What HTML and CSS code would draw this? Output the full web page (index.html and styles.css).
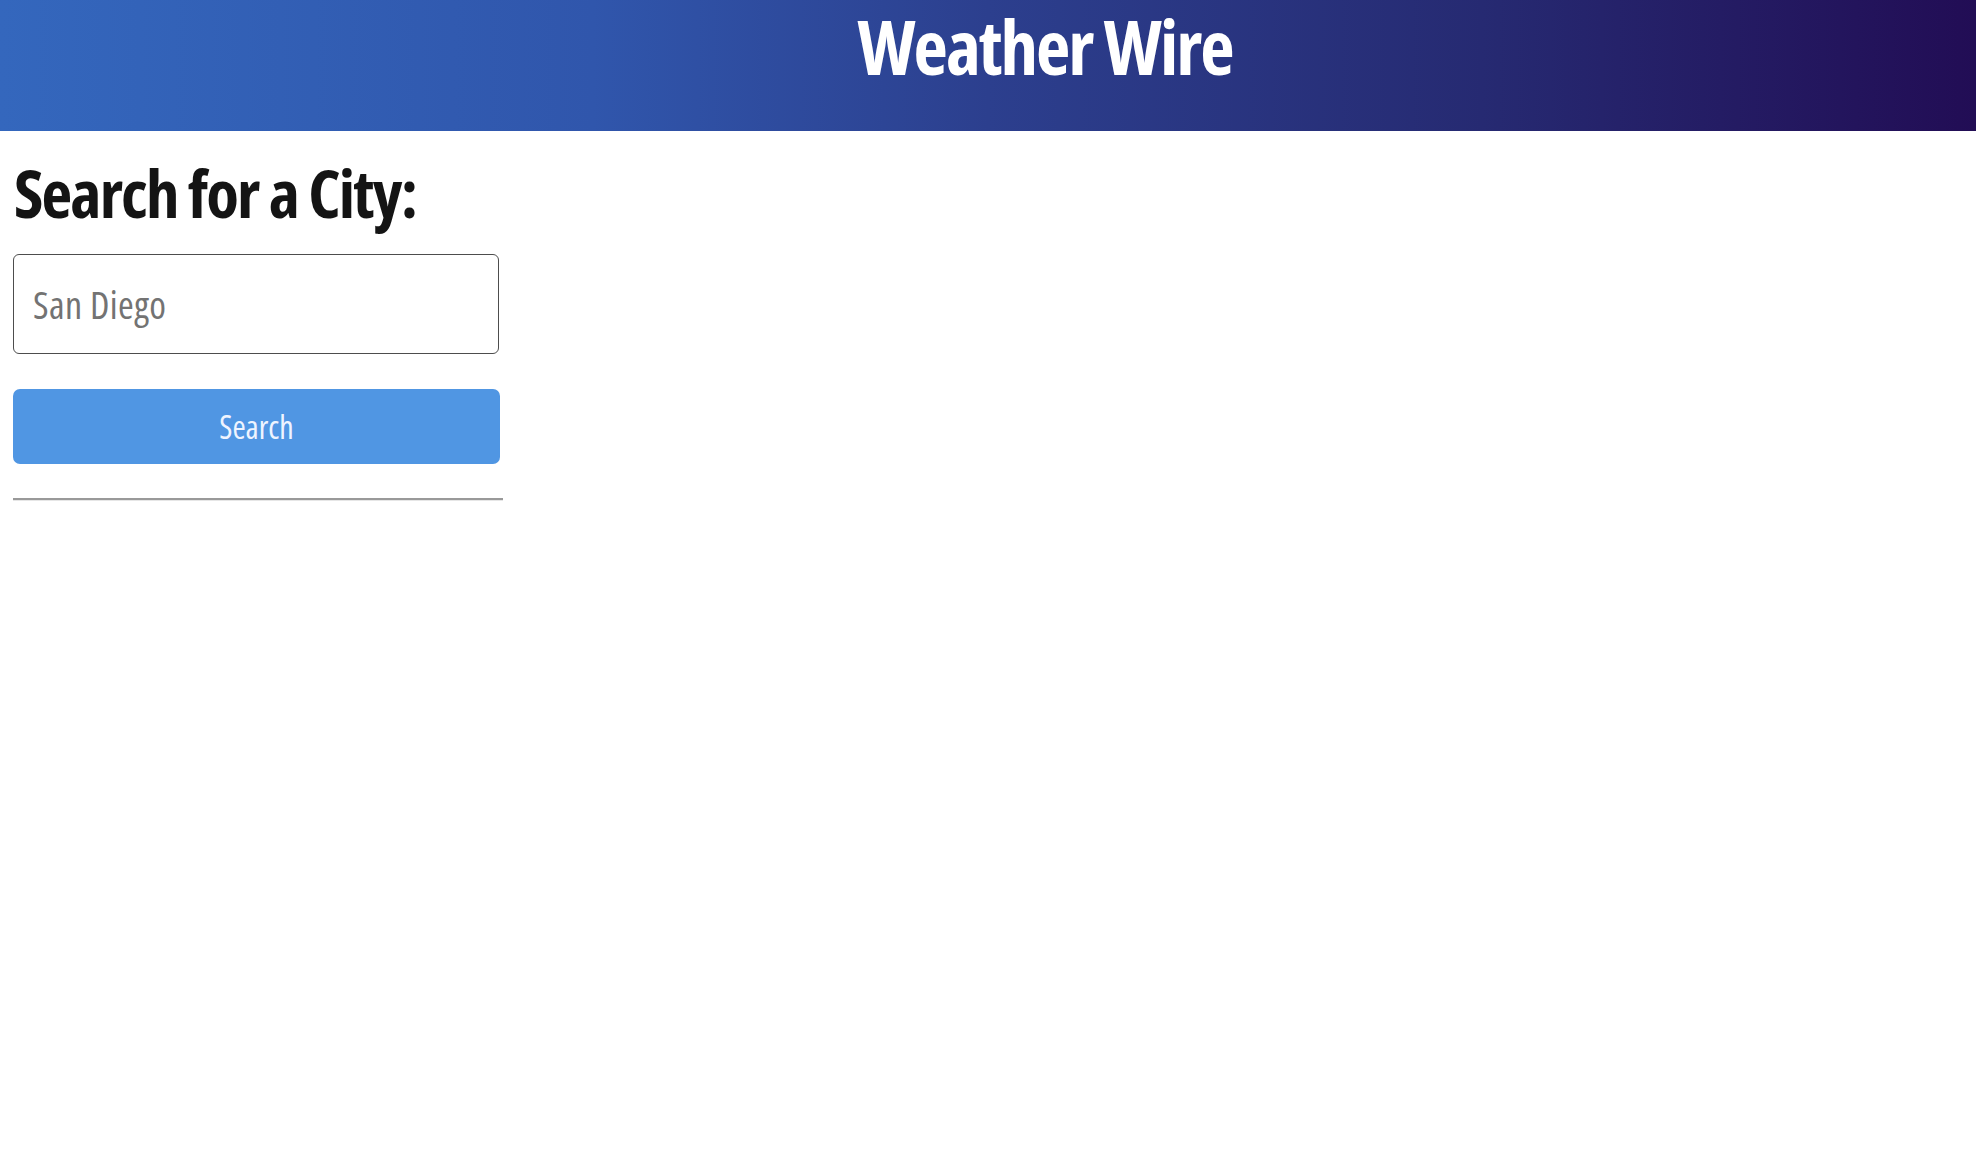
FILE: index.html
```html
<!DOCTYPE html>
<html lang="en">
<head>
<meta charset="utf-8">
<title>Weather Wire</title>
<link rel="stylesheet" href="styles.css">
</head>
<body>
<header class="top-bar">
  <h1 class="brand">Weather Wire</h1>
</header>
<main class="page">
  <section class="search-panel">
    <h2 class="search-title">Search for a City:</h2>
    <input class="city-input" type="text" placeholder="San Diego">
    <button class="search-btn" type="button">Search</button>
    <hr class="divider">
  </section>
</main>
</body>
</html>
```

FILE: styles.css
```css
html, body {
  margin: 0;
  padding: 0;
  background: #ffffff;
}

body {
  font-family: "Open Sans", "Noto Sans", Lato, sans-serif;
  font-stretch: 75%;
  color: #121212;
}

.top-bar {
  height: 131px;
  box-sizing: border-box;
  padding: 0 0 0 114px;
  background: linear-gradient(to right, #3467bd 0%, #3056ac 30%, #2c3f8e 50%, #262a72 75%, #220d55 100%);
  text-align: center;
}

.brand {
  margin: 0;
  font-size: 75px;
  line-height: 92px;
  letter-spacing: -2px;
  font-weight: 700;
  color: #ffffff;
}

.page {
  padding: 21px 13px 0 13px;
}

.search-panel {
  width: 490px;
  display: flex;
  flex-direction: column;
}

.search-title {
  margin: 0 0 22px 1px;
  font-size: 67px;
  line-height: 80px;
  letter-spacing: -1.8px;
  font-weight: 700;
  color: #141414;
}

.city-input {
  width: 486px;
  height: 100px;
  box-sizing: border-box;
  border: 1.5px solid #4d4d4d;
  border-radius: 6px;
  padding: 0 19px;
  font-family: inherit;
  font-stretch: 75%;
  font-size: 38px;
  letter-spacing: 0.4px;
  color: #222;
  outline: none;
}

.city-input::placeholder {
  color: #737373;
}

.search-btn {
  margin-top: 35px;
  width: 487px;
  height: 75px;
  border: none;
  border-radius: 7px;
  background: #5096e3;
  color: #eef4ff;
  font-family: inherit;
  font-stretch: 75%;
  font-size: 32px;
  font-weight: 400;
  cursor: pointer;
}

.divider {
  margin: 34px 0 0 0;
  width: 490px;
  height: 0;
  border: none;
  border-top: 2px solid #999999;
  border-bottom: 1px solid #e6e6e6;
}
```
